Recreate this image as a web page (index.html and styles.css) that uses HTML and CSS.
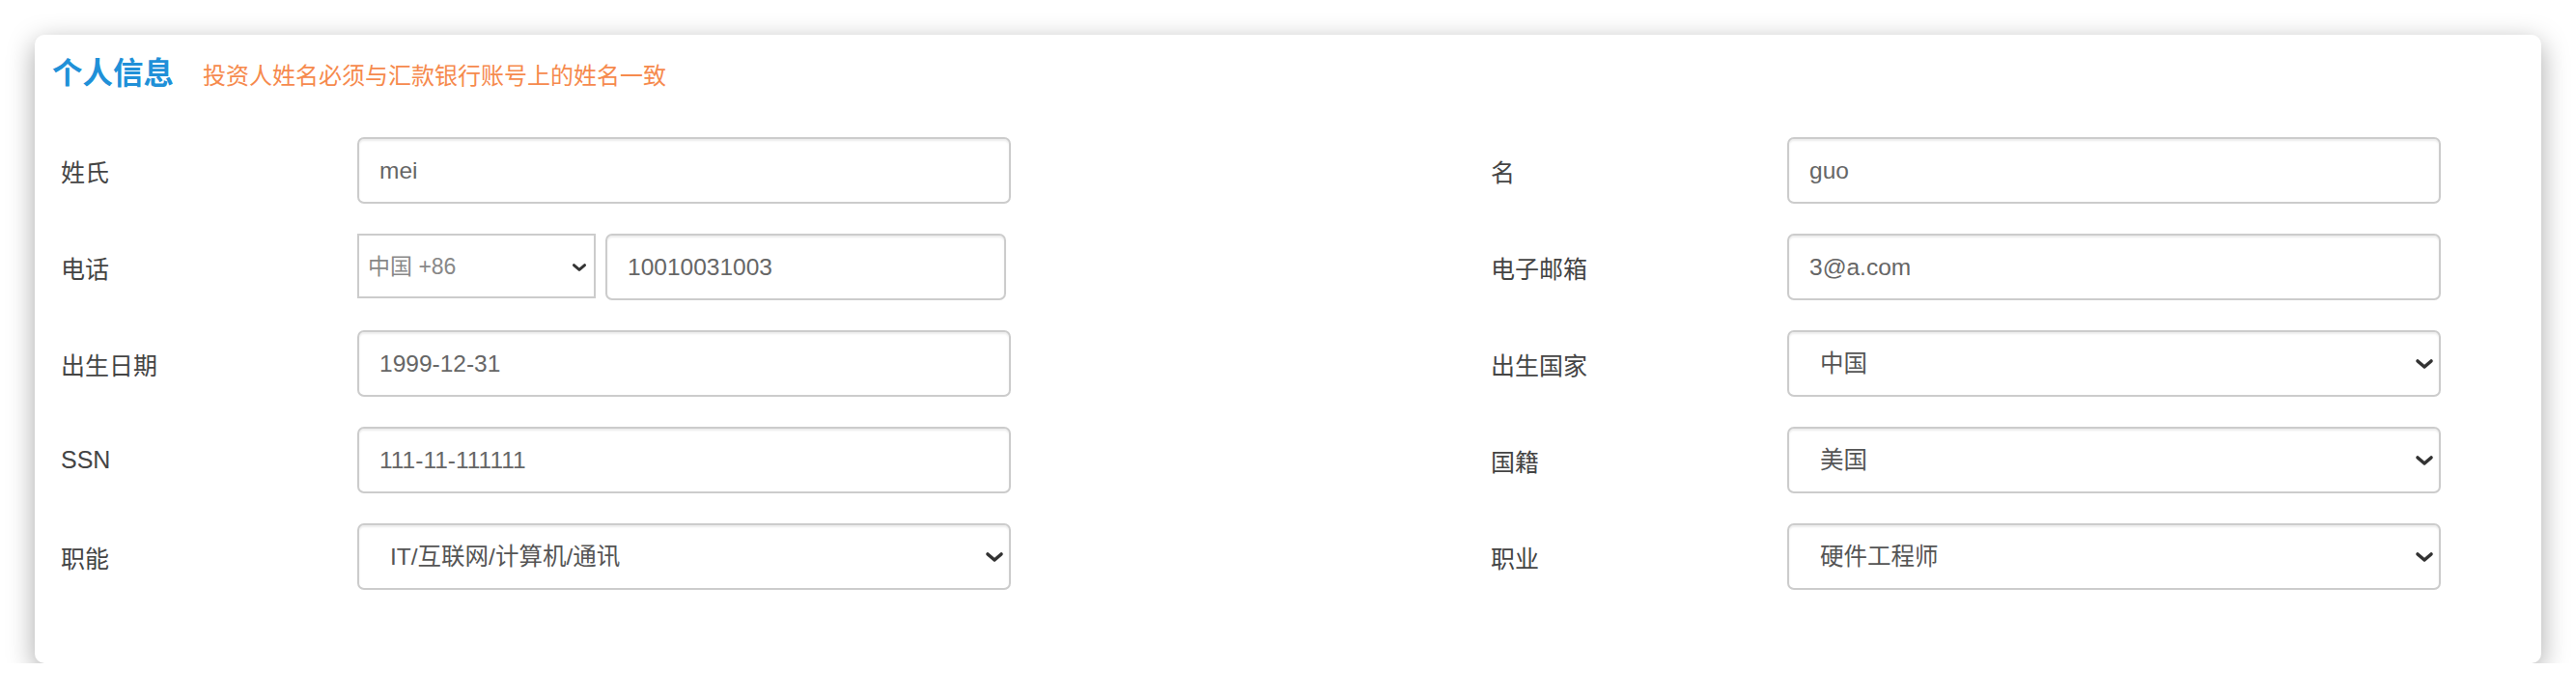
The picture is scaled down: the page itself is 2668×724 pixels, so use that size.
FILE: index.html
```html
<!DOCTYPE html>
<html lang="zh-CN">
<head>
	<meta charset="utf-8">
	<title>个人信息</title>
	<link rel="stylesheet" href="styles.css">
</head>
<body>
	<div class="infoPanel">
		<div class="panelHead">
			<h2>个人信息</h2>
			<span class="tip">投资人姓名必须与汇款银行账号上的姓名一致</span>
		</div>
		<div class="formGrid">
			<div class="field">
				<label>姓氏</label>
				<input type="text" class="ipt" value="mei">
			</div>
			<div class="field">
				<label>名</label>
				<input type="text" class="ipt" value="guo">
			</div>

			<div class="field">
				<label>电话</label>
				<div class="phoneBox">
					<span class="selWrap small">
						<select class="sel code"><option>中国 +86</option></select>
						<svg class="arrow" viewBox="0 0 20 12"><path d="M3 3 L10 9 L17 3"/></svg>
					</span>
					<input type="text" class="ipt" value="10010031003">
				</div>
			</div>
			<div class="field">
				<label>电子邮箱</label>
				<input type="text" class="ipt" value="3@a.com">
			</div>

			<div class="field">
				<label>出生日期</label>
				<input type="text" class="ipt" value="1999-12-31">
			</div>
			<div class="field">
				<label>出生国家</label>
				<span class="selWrap">
					<select class="sel"><option>中国</option></select>
					<svg class="arrow" viewBox="0 0 20 12"><path d="M3 3 L10 9 L17 3"/></svg>
				</span>
			</div>

			<div class="field">
				<label>SSN</label>
				<input type="text" class="ipt" value="111-11-111111">
			</div>
			<div class="field">
				<label>国籍</label>
				<span class="selWrap">
					<select class="sel"><option>美国</option></select>
					<svg class="arrow" viewBox="0 0 20 12"><path d="M3 3 L10 9 L17 3"/></svg>
				</span>
			</div>

			<div class="field">
				<label>职能</label>
				<span class="selWrap">
					<select class="sel"><option>IT/互联网/计算机/通讯</option></select>
					<svg class="arrow" viewBox="0 0 20 12"><path d="M3 3 L10 9 L17 3"/></svg>
				</span>
			</div>
			<div class="field">
				<label>职业</label>
				<span class="selWrap">
					<select class="sel"><option>硬件工程师</option></select>
					<svg class="arrow" viewBox="0 0 20 12"><path d="M3 3 L10 9 L17 3"/></svg>
				</span>
			</div>
		</div>
	</div>
</body>
</html>
```

FILE: styles.css
```css
* {margin:0; padding:0; box-sizing:border-box;}
body {background:#fff; font-family:"Liberation Sans", "Noto Sans CJK SC", sans-serif; color:#444;}

.infoPanel {margin:36px 36px 0; height:651px; padding:20px 18px 0; background:#fff; border-radius:10px; box-shadow:0 8px 28px rgba(0,0,0,.35);}
.panelHead {display:flex; align-items:baseline; gap:30px; height:40px; line-height:40px;}
.panelHead h2 {font-size:31.5px; font-weight:bold; color:#2090d8;}
.panelHead .tip {font-size:24px; color:#f68a4d;}

.formGrid {display:grid; grid-template-columns:1481px 1fr; row-gap:31px; margin-top:46px; padding:0 9px;}
.field {display:flex; align-items:center;}
.field label {width:307px; font-size:25px; color:#444;}

.ipt {width:677px; height:69px; padding:0 21px; font-family:inherit; font-size:24.5px; color:#666; border:2px solid #ccc; border-radius:7px; box-shadow:inset 0 2px 2px rgba(0,0,0,.075); background:#fff; outline:none;}

.selWrap {position:relative; display:block; width:677px;}
.sel {display:block; width:100%; height:69px; padding:0 40px 0 32px; font-family:inherit; font-size:24.5px; color:#555; border:2px solid #ccc; border-radius:7px; box-shadow:inset 0 2px 2px rgba(0,0,0,.075); background:#fff; appearance:none; -webkit-appearance:none; outline:none;}
.selWrap .arrow {position:absolute; right:7px; top:50%; width:20px; height:12px; margin-top:-6px; fill:none; stroke:#333; stroke-width:3.6; stroke-linecap:round; stroke-linejoin:round; pointer-events:none;}

.phoneBox {display:flex; gap:10px;}
.phoneBox .ipt {width:415px;}
.selWrap.small {width:247px;}
.selWrap.small .sel {height:67px; padding-left:9px; font-size:23px; color:#888; border-radius:0; box-shadow:none;}
.selWrap.small .arrow {right:9px; width:16px; height:10px; margin-top:-5px;}
```
